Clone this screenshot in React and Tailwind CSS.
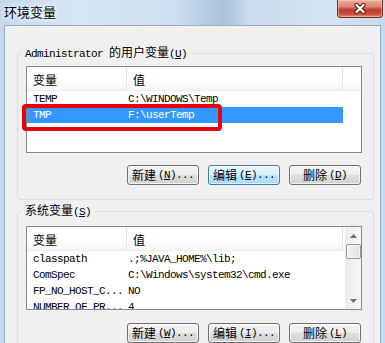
import React from "react";

const MONO = "font-['Liberation_Mono',monospace] text-[11px] tracking-[-0.6px]";

function Accel({ ch }) {
  return (
    <span className="font-['Liberation_Mono',monospace] text-[11px] tracking-[-0.6px]">
      (<span className="underline underline-offset-[1px]">{ch}</span>)
    </span>
  );
}

function Btn({ zh, k, dots, focus }) {
  return (
    <div
      className={
        focus
          ? "w-[72px] h-[20px] rounded-[3px] border border-[#3c7fb1] bg-[linear-gradient(#eaf6fd_0%,#d9f0fc_50%,#bee6fd_50%,#a7d9f5_100%)] shadow-[inset_0_0_0_1px_rgba(255,255,255,0.6)] flex items-center justify-center leading-[16px] whitespace-nowrap"
          : "w-[72px] h-[20px] rounded-[3px] border border-[#707070] bg-[linear-gradient(#f4f4f4_0%,#ececec_50%,#dedede_50%,#d2d2d2_100%)] shadow-[inset_0_0_0_1px_rgba(255,255,255,0.7)] flex items-center justify-center leading-[16px] whitespace-nowrap"
      }
    >
      <span className="mr-[2px]">{zh}</span>
      <Accel ch={k} />
      {dots ? <span className="font-['Liberation_Mono',monospace] text-[11px] tracking-[-0.6px]">...</span> : null}
    </div>
  );
}

function Header() {
  return (
    <div className="flex h-[24px] bg-[linear-gradient(#ffffff_0%,#ffffff_55%,#f4f5f7_100%)] border-b border-[#eeeeee]">
      <div className="w-[100px] pl-[6px] pt-[5px] leading-[16px] border-r border-[#e3e3e3]">变量</div>
      <div className="w-[216px] pl-[6px] pt-[5px] leading-[16px] border-r border-[#e3e3e3]">值</div>
      <div className="flex-1" />
    </div>
  );
}

function Row({ name, value, sel }) {
  return (
    <div
      className={
        sel
          ? "flex h-[16px] w-[316px] leading-[16px] font-['Liberation_Mono',monospace] text-[11px] tracking-[-0.6px] bg-[#3399ff] text-white"
          : "flex h-[16px] w-[316px] leading-[16px] font-['Liberation_Mono',monospace] text-[11px] tracking-[-0.6px] text-black"
      }
    >
      <div className="w-[100px] pl-[6px] whitespace-nowrap overflow-hidden">{name}</div>
      <div className="w-[216px] pl-[1px] whitespace-nowrap overflow-hidden">{value}</div>
    </div>
  );
}

function Arrow({ down }) {
  return (
    <div className="h-[17px] flex items-center justify-center">
      <svg width="7" height="4" viewBox="0 0 7 4">
        {down ? <path d="M0 0 L7 0 L3.5 4 Z" fill="#6b6b6b" /> : <path d="M0 4 L3.5 0 L7 4 Z" fill="#6b6b6b" />}
      </svg>
    </div>
  );
}

export default function App() {
  return (
    <div className="w-[385px] h-[343px] overflow-hidden flex flex-col bg-[linear-gradient(90deg,#c3d8ec_0%,#d6e6f4_20%,#cde0f1_45%,#aac2d9_58%,#cadcee_65%,#d4e4f2_85%,#c5daee_100%)] font-['Noto_Sans_CJK_SC',sans-serif] text-[12px] text-black">
      <div className="h-[25px] shrink-0 flex justify-between items-start pl-[4px] pr-[2px]">
        <span className="mt-[4px] leading-[16px] text-[13px] [text-shadow:0_0_5px_#fff,0_0_8px_#fff]">环境变量</span>
        <div className="w-[46px] h-[18px] rounded-b-[4px] border border-t-0 border-[#7a2a22] bg-[linear-gradient(#e9ad9f_0%,#da8471_40%,#c23b2b_56%,#c54a38_80%,#dc8a6e_100%)] shadow-[inset_0_0_0_1px_rgba(255,220,210,0.45)] flex items-center justify-center">
          <svg width="14" height="11" viewBox="0 0 14 11">
            <path d="M3.5 2 L10.5 9 M10.5 2 L3.5 9" stroke="#4e1a15" strokeWidth="4.2" strokeLinecap="round" />
            <path d="M3.5 2 L10.5 9 M10.5 2 L3.5 9" stroke="#ffffff" strokeWidth="2.2" strokeLinecap="round" />
          </svg>
        </div>
      </div>
      <div className="flex-1 mx-[4px] border border-b-0 border-[#9aadc2] bg-[#f0f0f0] pt-[18px] pl-[12px]">
        <fieldset className="w-[357px] border border-[#d5dfe5] rounded-[3px] pl-[8px] pb-[14px]">
          <legend className="ml-[-5px] px-[4px] leading-[16px] whitespace-nowrap">
            <span className={MONO}>Administrator </span>
            <span>的用户变量</span>
            <Accel ch="U" />
          </legend>
          <div className="relative w-[336px] h-[87px] border border-[#828790] bg-white mt-[4px]">
            <Header />
            <Row name="TEMP" value={"C:\\WINDOWS\\Temp"} />
            <Row name="TMP" value={"F:\\userTemp"} sel />
            <div className="absolute left-[-5px] top-[37px] w-[200px] h-[27px] border-[4px] border-[#e60012] rounded-[4px]" />
          </div>
          <div className="flex justify-end gap-[9px] mt-[12px] w-[336px] pr-[1px]">
            <Btn zh="新建" k="N" dots />
            <Btn zh="编辑" k="E" dots focus />
            <Btn zh="删除" k="D" />
          </div>
        </fieldset>
        <fieldset className="mt-[2px] w-[357px] border border-[#d5dfe5] rounded-[3px] pl-[8px] pb-[14px]">
          <legend className="ml-[-5px] px-[4px] leading-[16px] whitespace-nowrap">
            <span>系统变量</span>
            <Accel ch="S" />
          </legend>
          <div className="w-[336px] h-[84px] border border-[#828790] bg-white mt-[6px] flex">
            <div className="flex-1 overflow-hidden">
              <Header />
              <Row name="classpath" value={".;%JAVA_HOME%\\lib;"} />
              <Row name="ComSpec" value={"C:\\Windows\\system32\\cmd.exe"} />
              <Row name="FP_NO_HOST_C..." value="NO" />
              <Row name="NUMBER_OF_PR..." value="4" />
            </div>
            <div className="w-[16px] h-full flex flex-col bg-[linear-gradient(90deg,#ececec,#f7f7f7)] border-l border-[#ececec]">
              <Arrow />
              <div className="h-[15px] rounded-[2px] border border-[#979797] bg-[linear-gradient(90deg,#f3f3f3,#e0e0e0)] shadow-[inset_0_0_0_1px_rgba(255,255,255,0.7)]" />
              <div className="flex-1" />
              <Arrow down />
            </div>
          </div>
          <div className="flex justify-end gap-[9px] mt-[13px] w-[336px] pr-[1px]">
            <Btn zh="新建" k="W" dots />
            <Btn zh="编辑" k="I" dots />
            <Btn zh="删除" k="L" />
          </div>
        </fieldset>
      </div>
    </div>
  );
}
